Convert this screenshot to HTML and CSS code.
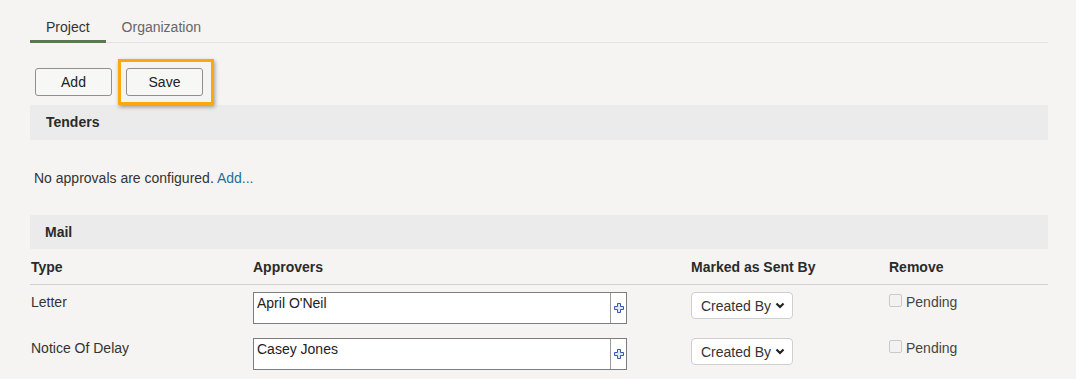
FILE: index.html
```html
<!DOCTYPE html>
<html lang="en">
<head>
    <meta charset="UTF-8">
    <meta name="viewport" content="width=device-width, initial-scale=1.0">
    <title>Approvals</title>
    <link rel="stylesheet" href="styles.css">
</head>
<body>
    <div class="page">
        <div class="tabs">
            <div class="tab active">Project</div>
            <div class="tab">Organization</div>
        </div>

        <div class="toolbar">
            <button class="btn">Add</button>
            <span class="highlight"><button class="btn">Save</button></span>
        </div>

        <div class="section-head">Tenders</div>
        <p class="empty">No approvals are configured. <a href="#">Add...</a></p>

        <div class="section-head mail">Mail</div>
        <div class="grid head">
            <div>Type</div>
            <div>Approvers</div>
            <div>Marked as Sent By</div>
            <div>Remove</div>
        </div>

        <div class="grid row">
            <div class="type">Letter</div>
            <div class="picker">
                <span class="picker-text">April O'Neil</span>
                <span class="picker-add">
                    <svg width="10" height="10" viewBox="0 0 10 10"><path d="M3.5 0.5h3v3h3v3h-3v3h-3v-3h-3v-3h3z" fill="#dfe8f8" stroke="#3457b0" stroke-width="1"/></svg>
                </span>
            </div>
            <div>
                <div class="select"><span>Created By</span>
                    <svg width="10" height="7" viewBox="0 0 10 7"><path d="M1.5 1.5l3.5 3.5 3.5-3.5" fill="none" stroke="#222" stroke-width="2.2"/></svg>
                </div>
            </div>
            <label class="remove"><span class="check"></span>Pending</label>
        </div>

        <div class="grid row">
            <div class="type">Notice Of Delay</div>
            <div class="picker">
                <span class="picker-text">Casey Jones</span>
                <span class="picker-add">
                    <svg width="10" height="10" viewBox="0 0 10 10"><path d="M3.5 0.5h3v3h3v3h-3v3h-3v-3h-3v-3h3z" fill="#dfe8f8" stroke="#3457b0" stroke-width="1"/></svg>
                </span>
            </div>
            <div>
                <div class="select"><span>Created By</span>
                    <svg width="10" height="7" viewBox="0 0 10 7"><path d="M1.5 1.5l3.5 3.5 3.5-3.5" fill="none" stroke="#222" stroke-width="2.2"/></svg>
                </div>
            </div>
            <label class="remove"><span class="check"></span>Pending</label>
        </div>
    </div>
</body>
</html>
```

FILE: styles.css
```css
/* General Styles */
body {
    font-family: "Liberation Sans", Arial, sans-serif;
    font-size: 14px;
    color: #333;
    margin: 0;
    padding: 0;
    background-color: #f5f4f2;
}
.page {
    width: 1018px;
    margin-left: 30px;
}

/* Tabs */
.tabs {
    display: flex;
    border-bottom: 1px solid #e4e3e1;
}
.tab {
    padding: 18px 16px 4px;
    line-height: 18px;
    color: #666;
    border-bottom: 3px solid transparent;
    margin-bottom: -1px;
}
.tab.active {
    color: #333;
    border-bottom-color: #5a7a4e;
}

/* Toolbar */
.toolbar {
    display: flex;
    align-items: center;
    gap: 6px;
    margin-top: 16px;
    padding-left: 5px;
}
.btn {
    width: 77px;
    height: 28px;
    font-family: inherit;
    font-size: 14px;
    color: #222;
    background: #f7f7f6;
    border: 1px solid #8f8f8f;
    border-radius: 3px;
    padding: 0;
}
.highlight {
    display: block;
    padding: 6px 8px 6px 5px;
    border: 3px solid #f7a90f;
    box-shadow: 1px 2px 4px rgba(0, 0, 0, 0.35);
}
.highlight .btn {
    display: block;
}

/* Sections */
.section-head {
    background: #ebebeb;
    height: 35px;
    line-height: 35px;
    padding-left: 16px;
    font-weight: bold;
    color: #2a2a2a;
}
.section-head.mail {
    height: 34px;
    line-height: 34px;
    padding-left: 15px;
}
.empty {
    margin: 0;
    padding: 29px 4px 28px;
    line-height: 18px;
}
.empty a {
    color: #1f6f9a;
    text-decoration: none;
}

/* Approvals table */
.grid {
    display: grid;
    grid-template-columns: 222px 438px 198px 1fr;
    padding-left: 1px;
}
.head {
    font-weight: bold;
    color: #2a2a2a;
    padding-top: 10px;
    height: 25px;
    border-bottom: 1px solid #d2d2d2;
}
.row {
    padding-top: 7px;
    height: 39px;
    align-items: start;
}
.type {
    padding-top: 2px;
}
.picker {
    display: flex;
    width: 372px;
    height: 30px;
    border: 1px solid #7d7d7d;
    background: #fff;
}
.picker-text {
    flex: 1;
    padding: 2px 3px;
    color: #222;
}
.picker-add {
    width: 15px;
    border-left: 1px solid #9a9a9a;
    display: flex;
    align-items: center;
    justify-content: center;
}
.select {
    display: flex;
    align-items: center;
    justify-content: space-between;
    width: 84px;
    height: 25px;
    padding: 0 7px 0 9px;
    background: #fff;
    border: 1px solid #cfcfcf;
    border-radius: 4px;
    color: #333;
}
.remove {
    display: flex;
    align-items: center;
    gap: 4px;
    color: #444;
    padding-top: 2px;
}
.check {
    width: 11px;
    height: 11px;
    border: 1px solid #c9c9c9;
    border-radius: 2px;
    background: #f2f2f2;
    margin-top: -3px;
}
```
